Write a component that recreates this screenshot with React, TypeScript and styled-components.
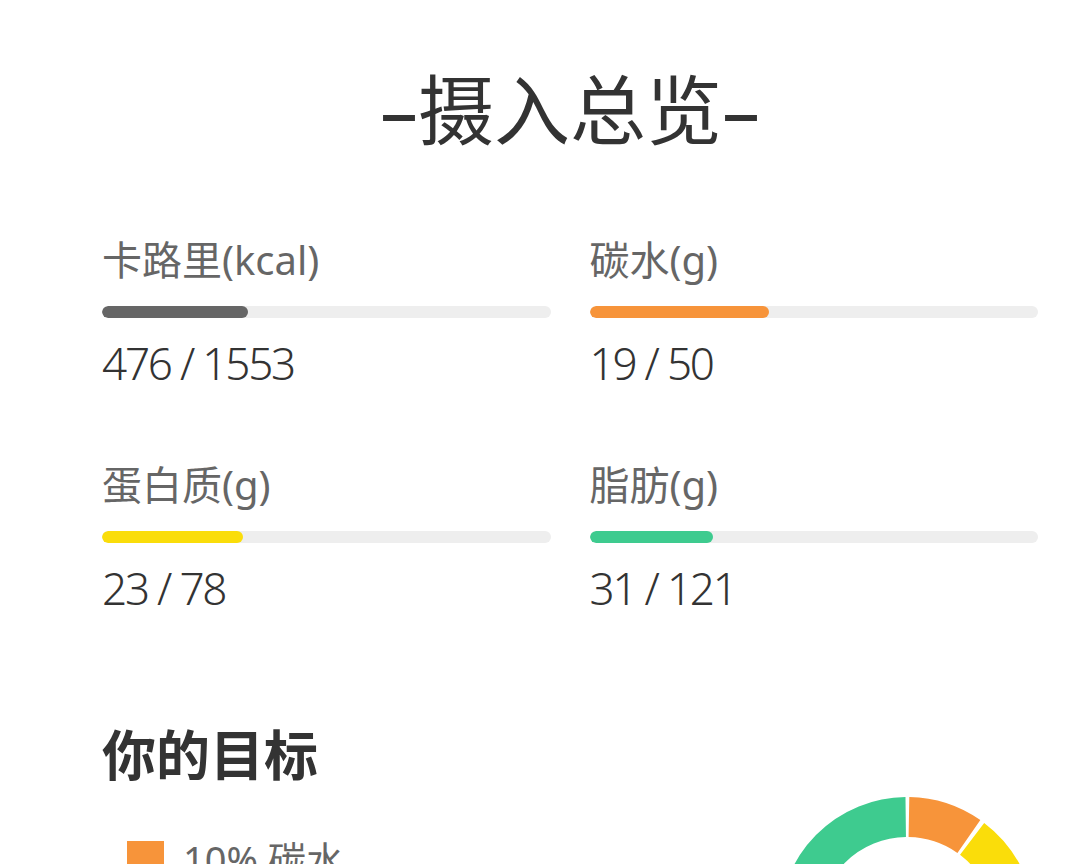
import React from "react";
import styled, { createGlobalStyle } from "styled-components";

const GlobalStyle = createGlobalStyle`
  body {
    margin: 0;
    background: #ffffff;
    font-family: "Noto Sans", "Noto Sans CJK SC", sans-serif;
  }
`;

type Stat = {
  label: string;
  value: number;
  target: number;
  color: string;
};

const stats: Stat[] = [
  { label: "卡路里(kcal)", value: 476, target: 1553, color: "#666666" },
  { label: "碳水(g)", value: 19, target: 50, color: "#f7943a" },
  { label: "蛋白质(g)", value: 23, target: 78, color: "#fadd0a" },
  { label: "脂肪(g)", value: 31, target: 121, color: "#3ecb8f" },
];

const goals = [
  { pct: 10, name: "碳水", color: "#f7943a" },
  { pct: 25, name: "蛋白质", color: "#fadd0a" },
  { pct: 65, name: "脂肪", color: "#3ecb8f" },
];

const Donut = () => {
  const r = 108;
  const c = 2 * Math.PI * r;
  const gap = 4;
  let offset = 0;
  return (
    <DonutSvg width="256" height="256" viewBox="0 0 256 256">
      <g transform="rotate(-90 128 128)">
        {goals.map((g) => {
          const len = (g.pct / 100) * c;
          const el = (
            <circle
              key={g.name}
              cx="128"
              cy="128"
              r={r}
              fill="none"
              stroke={g.color}
              strokeWidth="40"
              strokeDasharray={`${len - gap} ${c - len + gap}`}
              strokeDashoffset={-offset - gap / 2}
            />
          );
          offset += len;
          return el;
        })}
      </g>
    </DonutSvg>
  );
};

const App = () => {
  return (
    <Page>
      <GlobalStyle />
      <Title>–摄入总览–</Title>
      <StatGrid>
        {stats.map((s) => (
          <StatItem key={s.label}>
            <StatLabel>{s.label}</StatLabel>
            <Track>
              <Fill
                $color={s.color}
                style={{ width: `calc(${(s.value / s.target) * 100}% + 9px)` }}
              />
            </Track>
            <StatValue>
              {s.value} / {s.target}
            </StatValue>
          </StatItem>
        ))}
      </StatGrid>
      <SectionTitle>你的目标</SectionTitle>
      <GoalRow>
        <Legend>
          {goals.map((g) => (
            <LegendItem key={g.name}>
              <Swatch $color={g.color} />
              {g.pct}% {g.name}
            </LegendItem>
          ))}
        </Legend>
        <Donut />
      </GoalRow>
    </Page>
  );
};

const Page = styled.div`
  display: flex;
  flex-direction: column;
  padding: 64px 42px 40px 102px;
`;

const Title = styled.div`
  text-align: center;
  font-size: 76px;
  line-height: 91px;
  font-weight: 400;
  color: #333333;
`;

const StatGrid = styled.div`
  display: grid;
  grid-template-columns: 1fr 1fr;
  column-gap: 39px;
  row-gap: 72px;
  margin-top: 81px;
`;

const StatItem = styled.div`
  display: flex;
  flex-direction: column;
`;

const StatLabel = styled.div`
  font-size: 40px;
  line-height: 48px;
  color: #666666;
`;

const Track = styled.div`
  height: 12px;
  border-radius: 6px;
  background: #eeeeee;
  margin-top: 22px;
  overflow: hidden;
`;

const Fill = styled.div<{ $color: string }>`
  height: 100%;
  border-radius: 6px;
  background: ${(p) => p.$color};
`;

const StatValue = styled.div`
  margin-top: 19px;
  font-size: 44px;
  line-height: 52px;
  font-weight: 300;
  color: #333333;
  letter-spacing: -2.2px;
`;

const SectionTitle = styled.div`
  margin-top: 109px;
  font-size: 54px;
  line-height: 64px;
  font-weight: 700;
  color: #333333;
`;

const GoalRow = styled.div`
  display: flex;
  justify-content: space-between;
  align-items: flex-start;
  margin-top: 10px;
  padding-right: 3px;
`;

const Legend = styled.div`
  display: flex;
  flex-direction: column;
  gap: 28px;
  padding: 40px 0 0 25px;
`;

const LegendItem = styled.div`
  display: flex;
  align-items: center;
  gap: 19px;
  font-size: 38px;
  line-height: 44px;
  color: #666666;
`;

const Swatch = styled.span<{ $color: string }>`
  width: 37px;
  height: 37px;
  background: ${(p) => p.$color};
`;

const DonutSvg = styled.svg`
  display: block;
  flex-shrink: 0;
`;

export default App;
